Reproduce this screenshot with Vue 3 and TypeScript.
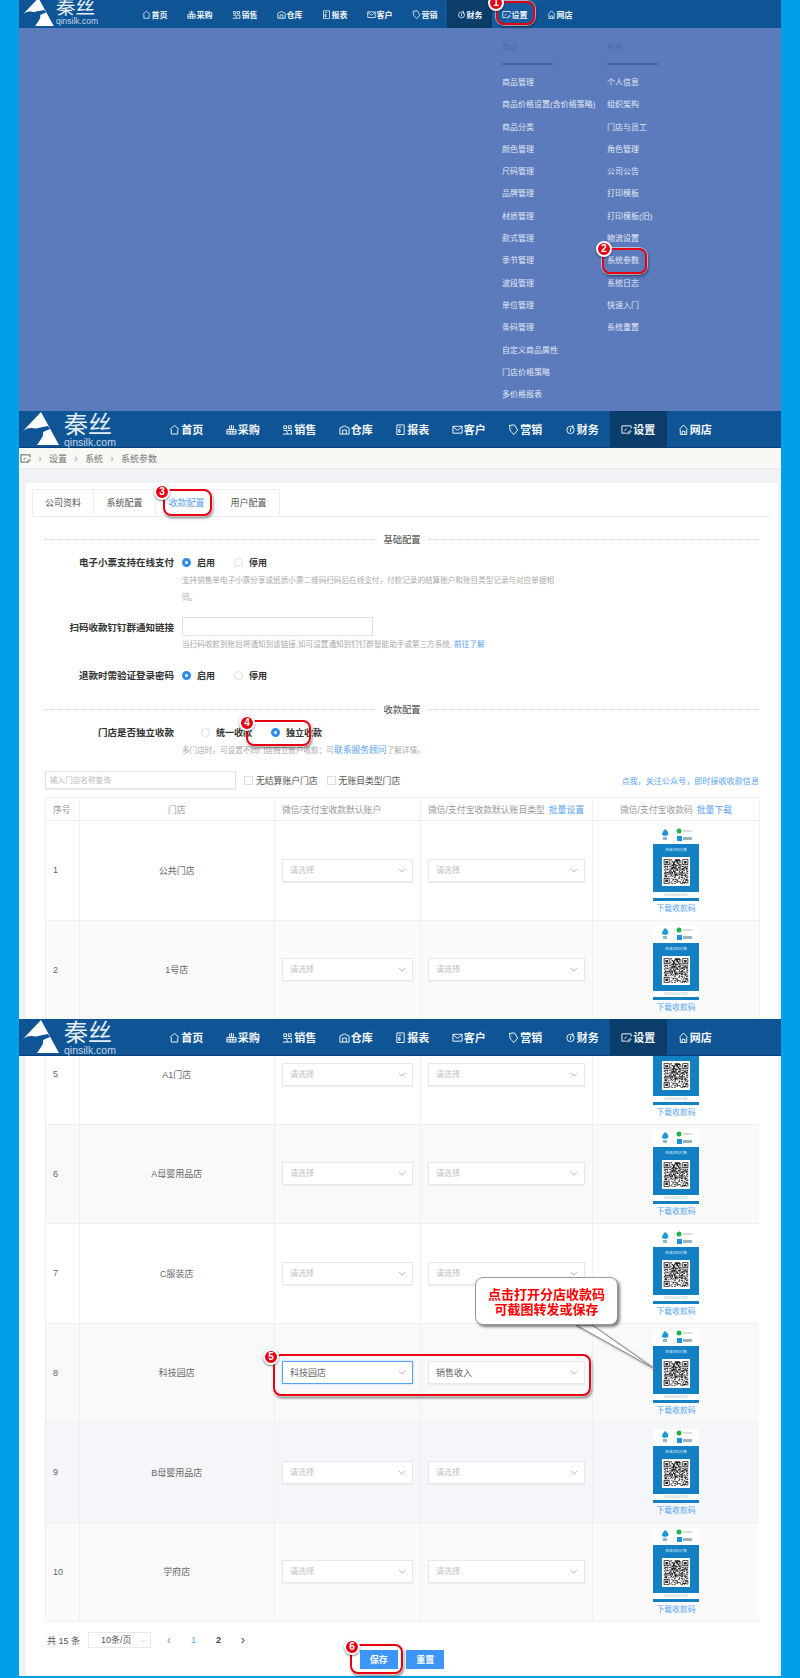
<script setup lang="ts">
const navItems = [
  { label: '首页', icon: 'M1 6 6 1.5 11 6M2.5 6v5h7V6' },
  { label: '采购', icon: 'M1 6h10v5H1zM4 6V1.5M8 6V1.5M6 6V1M1 8.5h10M4.5 6v5M7.5 6v5' },
  { label: '销售', icon: 'M1 11h10M2 2h3v3H2zM7 2h3v3H7zM1.5 7h4v4M6.5 7h4v4' },
  { label: '仓库', icon: 'M1 4.5 6 2l5 2.5V11H1zM4 11V6.5h4V11' },
  { label: '报表', icon: 'M2 1h8v10.5H2zM4 3.5h3M4 6h1.5v3H4z' },
  { label: '客户', icon: 'M1 2.5h10v7.5H1zM1 3l5 4 5-4' },
  { label: '营销', icon: 'M1.5 1.5 7 1l3.5 5.5-4 5-4-4zM4 3.5h.5' },
  { label: '财务', icon: 'M10 6.5a4 4 0 1 1-4-4 4 4 0 0 1 4 4zM6 4.5v4M8.5 1v4' },
  { label: '设置', icon: 'M1 2h10v3M1 2v8h5M4 7.5 6 5M7 10l3-3 1 1-3 3z' },
  { label: '网店', icon: 'M1.5 6 6 1l4.5 5M2.5 6v5.5h7V6M4.5 11.5V8h3v3.5' },
]

const goodsMenu = ['商品管理', '商品价格设置(含价格策略)', '商品分类', '颜色管理', '尺码管理', '品牌管理', '材质管理', '款式管理', '季节管理', '波段管理', '单位管理', '条码管理', '自定义商品属性', '门店价格策略', '多价格报表']
const systemMenu = ['个人信息', '组织架构', '门店与员工', '角色管理', '公司公告', '打印模板', '打印模板(旧)', '物流设置', '系统参数', '系统日志', '快速入门', '系统重置']

const tabs = ['公司资料', '系统配置', '收款配置', '用户配置']

const firstRows = [
  { no: 1, name: '公共门店', tint: '#ffffff' },
  { no: 2, name: '1号店', tint: '#fafafa' },
]
const lastRows = [
  { no: 5, name: 'A1门店', tint: '#ffffff', account: '', kind: '' },
  { no: 6, name: 'A母婴用品店', tint: '#f9f9f9', account: '', kind: '' },
  { no: 7, name: 'C服装店', tint: '#ffffff', account: '', kind: '' },
  { no: 8, name: '科技园店', tint: '#f9f9fa', account: '科技园店', kind: '销售收入' },
  { no: 9, name: 'B母婴用品店', tint: '#f5f6f9', account: '', kind: '' },
  { no: 10, name: '学府店', tint: '#fafafa', account: '', kind: '' },
]

const marks = [1, 2, 3, 4, 5, 6]

// 假二维码：固定种子，每张图都一样
function buildQrPath(size: number): string {
  let seed = 37
  let d = ''
  const inFinder = (x: number, y: number) =>
    (x < 8 && y < 8) || (x >= size - 8 && y < 8) || (x < 8 && y >= size - 8)
  for (let y = 0; y < size; y++) {
    for (let x = 0; x < size; x++) {
      seed = (seed * 1103515245 + 12345) & 0x7fffffff
      if (!inFinder(x, y) && (seed >> 16) % 2 === 0) d += `M${x} ${y}h1v1h-1z`
    }
  }
  for (const [x, y] of [[0, 0], [size - 7, 0], [0, size - 7]]) {
    d += `M${x} ${y}h7v7h-7zM${x + 1} ${y + 1}v5h5v-5zM${x + 2} ${y + 2}h3v3h-3z`
  }
  return d
}
const qrPath = buildQrPath(29)
</script>

<template>
  <div class="shot">
    <section class="block menu-block">
      <header class="topbar compact">
        <div class="logo">
          <svg class="logo-mark" viewBox="0 0 36 33"><path d="M0 19 18 0l18 33H14c4-6 7-9 6-13l7-3-2-3-10 2C12 18 8 13 0 19z" /></svg>
          <div class="logo-text"><b>秦丝</b><span>qinsilk.com</span></div>
        </div>
        <nav class="nav">
          <a v-for="item in navItems" :key="item.label" class="nav-item" :class="{ active: item.label === '财务', lit: item.label === '设置' }">
            <svg viewBox="0 0 12 12"><path :d="item.icon" /></svg>{{ item.label }}
          </a>
        </nav>
      </header>
      <div class="dropdown">
        <div class="menu-col">
          <div class="menu-title">商品</div>
          <ul>
            <li v-for="m in goodsMenu" :key="m">{{ m }}</li>
          </ul>
        </div>
        <div class="menu-col">
          <div class="menu-title">系统</div>
          <ul>
            <li v-for="m in systemMenu" :key="m">{{ m }}</li>
          </ul>
        </div>
      </div>
    </section>

    <section class="block form-block">
      <header class="topbar">
        <div class="logo">
          <svg class="logo-mark" viewBox="0 0 36 33"><path d="M0 19 18 0l18 33H14c4-6 7-9 6-13l7-3-2-3-10 2C12 18 8 13 0 19z" /></svg>
          <div class="logo-text"><b>秦丝</b><span>qinsilk.com</span></div>
        </div>
        <nav class="nav">
          <a v-for="item in navItems" :key="item.label" class="nav-item" :class="{ active: item.label === '设置' }">
            <svg viewBox="0 0 12 12"><path :d="item.icon" /></svg>{{ item.label }}
          </a>
        </nav>
      </header>
      <div class="crumbs">
        <svg viewBox="0 0 12 12"><path :d="navItems[8].icon" /></svg>
        <i>›</i><span>设置</span><i>›</i><span>系统</span><i>›</i><span>系统参数</span>
      </div>
      <div class="card">
        <div class="tabs">
          <span v-for="t in tabs" :key="t" class="tab" :class="{ on: t === '收款配置' }">{{ t }}</span>
        </div>

        <div class="divider first"><span>基础配置</span></div>
        <div class="field row-one">
          <label>电子小票支持在线支付</label>
          <span class="radio on" />启用
          <span class="radio off" />停用
        </div>
        <p class="help wrap">支持销售单电子小票分享或纸质小票二维码扫码后在线支付，付款记录的结算账户和账目类型记录与对应单据相同。</p>
        <div class="field link-row">
          <label>扫码收款钉钉群通知链接</label>
          <span class="text-input" />
        </div>
        <p class="help under">当扫码收款到账后将通知到该链接,如可设置通知到钉钉群智能助手或第三方系统, <a>前往了解</a></p>
        <div class="field refund">
          <label>退款时需验证登录密码</label>
          <span class="radio on" />启用
          <span class="radio off" />停用
        </div>

        <div class="divider second"><span>收款配置</span></div>
        <div class="field row-one">
          <label>门店是否独立收款</label>
          <span class="radio off" />统一收款
          <span class="radio on tight" />独立收款
        </div>
        <p class="help after">多门店时，可设置不同门店独立账户收款；可<a class="big">联系服务顾问</a>了解详情。</p>

        <div class="toolbar">
          <span class="search">输入门店名称查询</span>
          <span class="check" />无结算账户门店
          <span class="check second-check" />无账目类型门店
          <a class="follow">点我，关注公众号，即时接收收款信息</a>
        </div>

        <div class="grid head">
          <div>序号</div>
          <div class="center">门店</div>
          <div>微信/支付宝收款默认账户</div>
          <div>微信/支付宝收款默认账目类型 <a>批量设置</a></div>
          <div class="center">微信/支付宝收款码 <a>批量下载</a></div>
        </div>
        <div v-for="row in firstRows" :key="row.no" class="grid row" :style="{ background: row.tint }">
          <div>{{ row.no }}</div>
          <div class="center">{{ row.name }}</div>
          <div><span class="select">请选择<svg viewBox="0 0 10 6"><path d="M1 1l4 4 4-4" /></svg></span></div>
          <div><span class="select">请选择<svg viewBox="0 0 10 6"><path d="M1 1l4 4 4-4" /></svg></span></div>
          <div class="center qr-cell">
            <div class="qr-card">
              <div class="qr-top">
                <svg viewBox="0 0 46 16">
                  <path d="M12 2c3 2 4 4 3 6-1 1-5 1-6 0 0-2 1-4 3-6z" fill="#1b9ad6" />
                  <rect x="10" y="10" width="4" height="3" fill="#8fb7d0" />
                  <line x1="21" y1="1" x2="21" y2="15" stroke="#eee" />
                  <circle cx="26" cy="4" r="2.5" fill="#22b14c" /><rect x="30" y="3" width="9" height="2" fill="#ddd" />
                  <rect x="24" y="9" width="5" height="5" fill="#1b8fe0" /><rect x="30" y="10" width="9" height="3" fill="#9db3c4" />
                </svg>
              </div>
              <div class="qr-blue">
                <span>在线扫码付款</span>
                <svg viewBox="-2 -2 33 33"><path :d="qrPath" /></svg>
              </div>
              <div class="qr-no">00370000321330</div>
              <div class="qr-bar" />
            </div>
            <a class="qr-link">下载收款码</a>
          </div>
        </div>
      </div>
    </section>

    <section class="block table-block">
      <header class="topbar">
        <div class="logo">
          <svg class="logo-mark" viewBox="0 0 36 33"><path d="M0 19 18 0l18 33H14c4-6 7-9 6-13l7-3-2-3-10 2C12 18 8 13 0 19z" /></svg>
          <div class="logo-text"><b>秦丝</b><span>qinsilk.com</span></div>
        </div>
        <nav class="nav">
          <a v-for="item in navItems" :key="item.label" class="nav-item" :class="{ active: item.label === '设置' }">
            <svg viewBox="0 0 12 12"><path :d="item.icon" /></svg>{{ item.label }}
          </a>
        </nav>
      </header>
      <div class="card tail-card">
        <div class="table-clip">
          <div v-for="row in lastRows" :key="row.no" class="grid row" :style="{ background: row.tint }">
            <div>{{ row.no }}</div>
            <div class="center">{{ row.name }}</div>
            <div>
              <span class="select" :class="{ filled: row.account, focus: row.account }">{{ row.account || '请选择' }}<svg viewBox="0 0 10 6"><path d="M1 1l4 4 4-4" /></svg></span>
            </div>
            <div>
              <span class="select" :class="{ filled: row.kind }">{{ row.kind || '请选择' }}<svg viewBox="0 0 10 6"><path d="M1 1l4 4 4-4" /></svg></span>
            </div>
            <div class="center qr-cell">
              <div class="qr-card">
                <div class="qr-top">
                  <svg viewBox="0 0 46 16">
                    <path d="M12 2c3 2 4 4 3 6-1 1-5 1-6 0 0-2 1-4 3-6z" fill="#1b9ad6" />
                    <rect x="10" y="10" width="4" height="3" fill="#8fb7d0" />
                    <line x1="21" y1="1" x2="21" y2="15" stroke="#eee" />
                    <circle cx="26" cy="4" r="2.5" fill="#22b14c" /><rect x="30" y="3" width="9" height="2" fill="#ddd" />
                    <rect x="24" y="9" width="5" height="5" fill="#1b8fe0" /><rect x="30" y="10" width="9" height="3" fill="#9db3c4" />
                  </svg>
                </div>
                <div class="qr-blue">
                  <span>在线扫码付款</span>
                  <svg viewBox="-2 -2 33 33"><path :d="qrPath" /></svg>
                </div>
                <div class="qr-no">00370000321330</div>
                <div class="qr-bar" />
              </div>
              <a class="qr-link">下载收款码</a>
            </div>
          </div>
        </div>
        <div class="pager">
          <span class="total">共 15 条</span>
          <span class="size">10条/页<svg viewBox="0 0 10 6"><path d="M1 1l4 4 4-4" /></svg></span>
          <i class="arrow prev">‹</i>
          <b class="page cur">1</b>
          <b class="page">2</b>
          <i class="arrow next">›</i>
        </div>
        <div class="actions">
          <button>保存</button>
          <button>重置</button>
        </div>
      </div>
    </section>

    <!-- 教程标注 -->
    <template v-for="n in marks" :key="n">
      <div class="mark-box" :class="`box-${n}`" />
      <div class="mark-dot" :class="`dot-${n}`">{{ n }}</div>
    </template>
    <svg class="callout-tail" viewBox="0 0 90 52"><path d="M6 4h16l63 44z" /></svg>
    <div class="callout">点击打开分店收款码<br />可截图转发或保存</div>
  </div>
</template>

<style>
html, body { margin: 0; background: #00a0e9; }
</style>

<style scoped>
.shot {
  position: relative;
  width: 800px;
  height: 1678px;
  box-sizing: border-box;
  padding: 0 19px;
  background: #00a0e9;
  overflow: hidden;
  font-family: "Liberation Sans", "Noto Sans CJK SC", sans-serif;
  font-size: 9px;
  color: #666;
}
.block { overflow: hidden; }
.menu-block { height: 411px; background: #5b7bbd; }
.form-block { height: 608px; background: #f0f2f5; }
.table-block { height: 657px; background: #f0f2f5; }

/* top bar */
.topbar {
  display: flex;
  height: 37px;
  box-sizing: border-box;
  background: #0f5596;
  border-bottom: 1px solid #0a3e78;
}
.logo { display: flex; width: 139px; flex: none; padding: 1px 0 0 4px; box-sizing: border-box; }
.logo-mark { width: 36px; height: 33px; fill: #fff; flex: none; }
.logo-text { display: flex; flex-direction: column; margin-left: 5px; color: #e6eef6; }
.logo-text b { font-size: 24px; line-height: 25px; font-weight: 400; letter-spacing: 0; }
.logo-text span { font-size: 10.5px; line-height: 10px; color: #c4d6e8; }
.nav { display: flex; }
.nav-item {
  width: 56.5px;
  display: flex;
  align-items: center;
  justify-content: center;
  gap: 1px;
  font-size: 11px;
  font-weight: 700;
  color: #f2f5f9;
}
.nav-item svg { width: 11px; height: 11px; fill: none; stroke: #fff; stroke-width: 1; }
.nav-item.active { background: #0b3d6b; }
.compact { height: 28px; border-bottom: 0; }
.compact .logo { width: 113px; padding: 0 0 0 4px; }
.compact .logo-mark { width: 31px; height: 28px; margin-top: -2px; }
.compact .logo-text { margin-left: 2px; margin-top: -3px; }
.compact .logo-text b { font-size: 19.5px; line-height: 20px; }
.compact .logo-text span { font-size: 8.5px; line-height: 8px; }
.compact .nav-item { width: 45px; font-size: 8px; }
.compact .nav-item svg { width: 9px; height: 9px; }
.compact .nav-item.lit { background: #155b9e; }

/* dropdown */
.dropdown { display: flex; padding: 14px 0 0 483px; color: #e3e8f4; font-size: 8px; }
.menu-col { width: 105px; flex: none; }
.menu-title { line-height: 12px; color: #4a6bab; }
.menu-title::after { content: ""; display: block; width: 51px; height: 2px; margin-top: 9px; background: #44639f; }
.menu-col ul { margin: 7px 0 0; padding: 0; list-style: none; }
.menu-col li { height: 22.3px; line-height: 22.3px; white-space: nowrap; }

/* breadcrumb */
.crumbs {
  display: flex;
  align-items: center;
  height: 21px;
  box-sizing: border-box;
  background: #f8f8f5;
  border-bottom: 1px solid #e9e9e9;
  color: #777;
}
.crumbs svg { width: 11px; height: 11px; margin-left: 1px; fill: none; stroke: #555; }
.crumbs i { width: 30px; width: 18px; text-align: center; font-style: normal; color: #aaa; font-size: 11px; line-height: 1; }
.crumbs span { white-space: nowrap; }

/* card */
.card {
  margin: 14px 3px 0 7px;
  padding: 6px 19px 0;
  background: #fff;
  min-height: 600px;
}
.tabs {
  display: flex;
  height: 27px;
  margin: 0 -12px 0 -13px;
  border-bottom: 1px solid #eceef1;
}
.tab {
  width: 62px;
  height: 27px;
  box-sizing: border-box;
  border: 1px solid #eceef1;
  border-left-width: 0;
  border-bottom: 0;
  text-align: center;
  line-height: 27px;
  color: #555;
}
.tab:first-child { border-left-width: 1px; }
.tab.on { color: #57a3f3; }

.divider { display: flex; align-items: center; gap: 8px; height: 14px; color: #444; font-size: 9.3px; }
.divider::before, .divider::after { content: ""; flex: 1; border-top: 1px dotted #c9c9c9; }
.divider.first { margin-top: 15px; }
.divider.second { margin-top: 20px; }

.field { display: flex; align-items: center; height: 14px; color: #333; font-weight: 700; }
.field label { width: 129px; margin-right: 8px; text-align: right; font-size: 9.5px; flex: none; }
.row-one { margin-top: 9px; }
.link-row { margin-top: 11px; height: 19px; }
.refund { margin-top: 16px; }
.radio {
  width: 9px;
  height: 9px;
  margin-right: 6px;
  border-radius: 50%;
  box-sizing: border-box;
  flex: none;
}
.radio.on { border: 3px solid #2d8cf0; background: #fff; }
.radio.off { border: 1px solid #ddd; margin-left: 19px; }
.radio.on.tight { margin-left: 19px; }
.text-input { width: 191px; height: 19px; box-sizing: border-box; border: 1px solid #dfe3e8; background: #fff; }

.help { margin: 0 0 0 137px; color: #aaa; font-size: 7.6px; line-height: 14px; }
.help.wrap { width: 376px; margin-top: 3px; line-height: 17px; }
.help.under { margin-top: 2px; }
.help.after { margin-top: 4px; }
.help a, .follow, .grid a, .qr-link { color: #57a3f3; }
.help a.big { font-size: 8.8px; }

.toolbar { display: flex; align-items: center; height: 18px; margin-top: 13px; color: #555; font-size: 8.8px; }
.search {
  width: 191px;
  height: 18px;
  margin-right: 8px;
  padding-left: 4px;
  box-sizing: border-box;
  border: 1px solid #dfe3e8;
  box-shadow: 0 1px 1px #eee;
  line-height: 17px;
  color: #bbb;
  font-size: 7.6px;
}
.check { width: 9px; height: 9px; margin-right: 3px; box-sizing: border-box; border: 1px solid #ddd; }
.second-check { margin-left: 9px; }
.follow { margin-left: auto; font-size: 8.1px; }

/* table */
.grid {
  display: grid;
  grid-template-columns: 33.5px 195.5px 146px 172px 167px;
  border-left: 1px solid #eef0f3;
  margin-right: -1px;
  box-sizing: border-box;
}
.grid > div {
  display: flex;
  align-items: center;
  padding-left: 7px;
  box-sizing: border-box;
  border-right: 1px solid #eef0f3;
  border-bottom: 1px solid #eef0f3;
  min-width: 0;
  gap: 4px;
  white-space: nowrap;
}
.grid > div.center { justify-content: center; padding-left: 0; }
.head { margin-top: 8px; height: 24px; color: #999; border-top: 1px solid #eef0f3; font-size: 8.8px; }
.row { height: 99.5px; color: #666; }
.select {
  position: relative;
  display: block;
  width: calc(100% - 7px);
  height: 23px;
  padding-left: 7px;
  box-sizing: border-box;
  background: #fff;
  border: 1px solid #e6e8ec;
  box-shadow: 0 1px 1px #eceef0;
  color: #c2c2c2;
  font-size: 8px;
  line-height: 22px;
}
.select.filled { color: #666; font-size: 9px; }
.select.focus { border-color: #57a3f3; box-shadow: 0 0 2px #a9d2fb; }
.select svg {
  position: absolute;
  right: 6px;
  top: 8px;
  width: 8px;
  height: 5px;
  fill: none;
  stroke: #aaa;
}
.qr-cell { flex-direction: column; gap: 0 !important; }
.qr-card { width: 46px; }
.qr-top { height: 17px; background: #fff; }
.qr-top svg { display: block; width: 46px; height: 16px; }
.qr-blue {
  display: flex;
  flex-direction: column;
  align-items: center;
  height: 48px;
  background: #1380c4;
  color: #dcefff;
  font-size: 3.6px;
  line-height: 13px;
}
.qr-blue span { height: 13px; }
.qr-blue svg { display: block; width: 28px; height: 29px; background: #fff; fill: #222; fill-rule: evenodd; }
.qr-no { height: 6px; font-size: 3px; line-height: 6px; text-align: center; color: #9bb; background: #fff; }
.qr-bar { height: 3px; background: #1380c4; }
.qr-link { margin-top: 2px; font-size: 7.8px; line-height: 11px; }

/* last section */
.tail-card { margin-top: 0; padding-top: 0; min-height: 0; height: 620px; }
.table-clip {
  display: flex;
  flex-direction: column;
  justify-content: flex-end;
  height: 566px;
  overflow: hidden;
}
.table-clip .row { flex: none; }
.pager { display: flex; align-items: center; height: 16px; margin-top: 10px; padding-left: 2px; color: #555; }
.total { width: 41px; }
.size {
  position: relative;
  width: 63px;
  height: 16px;
  padding-left: 12px;
  box-sizing: border-box;
  border: 1px solid #e6e8ec;
  line-height: 15px;
}
.size svg { position: absolute; right: 4px; top: 6px; width: 6px; height: 4px; fill: none; stroke: #bbb; }
.arrow { font-style: normal; font-size: 12px; line-height: 1; color: #999; }
.arrow.prev { margin-left: 16px; }
.arrow.next { margin-left: 20px; color: #444; }
.page { margin-left: 20px; color: #444; font-size: 9px; }
.prev + .page { margin-left: 20px; }
.page.cur { color: #57a3f3; font-weight: 400; }
.actions { display: flex; justify-content: center; gap: 8.5px; margin-top: 2px; }
.actions button {
  width: 38px;
  height: 19px;
  padding: 0;
  border: 0;
  background: #3d96f5;
  color: #fff;
  font: 700 9px "Liberation Sans", "Noto Sans CJK SC", sans-serif;
}

/* tutorial marks, they sit over the screenshot */
.mark-box {
  position: absolute;
  box-sizing: border-box;
  border: 2px solid #e60012;
  border-radius: 8px;
  box-shadow: 0 0 0 1px rgba(255, 255, 255, .55), 1px 2px 3px rgba(0, 0, 0, .55);
}
.mark-dot {
  position: absolute;
  width: 16px;
  height: 16px;
  box-sizing: border-box;
  margin: -8px 0 0 -8px;
  border: 2px solid #fff;
  border-radius: 50%;
  background: #e60012;
  box-shadow: 0 1px 2px rgba(0, 0, 0, .5);
  color: #fff;
  font-size: 10px;
  font-weight: 700;
  line-height: 12px;
  text-align: center;
}
.box-1 { left: 496px; top: 1px; width: 39px; height: 24px; }
.dot-1 { left: 496px; top: 3px; }
.box-2 { left: 602px; top: 248px; width: 45px; height: 26px; }
.dot-2 { left: 604px; top: 249px; }
.box-3 { left: 163px; top: 489px; width: 49px; height: 27px; }
.dot-3 { left: 162px; top: 492px; }
.box-4 { left: 246px; top: 720px; width: 65px; height: 26px; }
.dot-4 { left: 247px; top: 723px; }
.box-5 { left: 273px; top: 1354px; width: 318px; height: 42px; }
.dot-5 { left: 271px; top: 1357px; }
.box-6 { left: 350px; top: 1644px; width: 53px; height: 30px; }
.dot-6 { left: 352px; top: 1647px; }

.callout-tail {
  position: absolute;
  left: 570px;
  top: 1321px;
  width: 90px;
  height: 52px;
  fill: #fff;
  stroke: #8a8a8a;
  stroke-width: 1;
  filter: drop-shadow(1px 1px 1px rgba(0, 0, 0, .4));
}
.callout {
  position: absolute;
  left: 475px;
  top: 1277px;
  width: 143px;
  height: 48px;
  box-sizing: border-box;
  padding-top: 9px;
  background: #fff;
  border: 1px solid #9a9a9a;
  border-radius: 8px;
  box-shadow: 2px 2px 3px rgba(0, 0, 0, .5);
  color: #f00;
  font-size: 13px;
  font-weight: 700;
  line-height: 15px;
  text-align: center;
}
</style>
